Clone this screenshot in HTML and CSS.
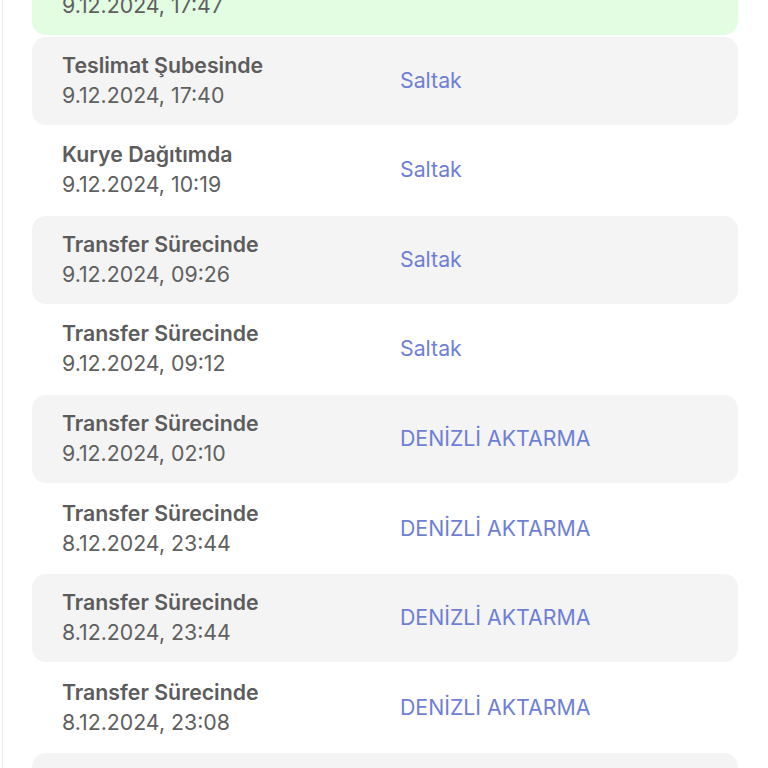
FILE: index.html
```html
<!DOCTYPE html>
<html lang="tr">
<head>
<meta charset="utf-8">
<link rel="stylesheet" href="styles.css">
</head>
<body>
<div class="page">
  <div class="list">
    <div class="row green">
      <div class="info"><div class="title">Teslim Edildi</div><div class="date">9.12.2024, 17:47</div></div>
      <div class="place">Saltak</div>
    </div>
    <div class="row grey">
      <div class="info"><div class="title">Teslimat Şubesinde</div><div class="date">9.12.2024, 17:40</div></div>
      <div class="place">Saltak</div>
    </div>
    <div class="row">
      <div class="info"><div class="title">Kurye Dağıtımda</div><div class="date">9.12.2024, 10:19</div></div>
      <div class="place">Saltak</div>
    </div>
    <div class="row grey">
      <div class="info"><div class="title">Transfer Sürecinde</div><div class="date">9.12.2024, 09:26</div></div>
      <div class="place">Saltak</div>
    </div>
    <div class="row">
      <div class="info"><div class="title">Transfer Sürecinde</div><div class="date">9.12.2024, 09:12</div></div>
      <div class="place">Saltak</div>
    </div>
    <div class="row grey">
      <div class="info"><div class="title">Transfer Sürecinde</div><div class="date">9.12.2024, 02:10</div></div>
      <div class="place">DENİZLİ AKTARMA</div>
    </div>
    <div class="row">
      <div class="info"><div class="title">Transfer Sürecinde</div><div class="date">8.12.2024, 23:44</div></div>
      <div class="place">DENİZLİ AKTARMA</div>
    </div>
    <div class="row grey">
      <div class="info"><div class="title">Transfer Sürecinde</div><div class="date">8.12.2024, 23:44</div></div>
      <div class="place">DENİZLİ AKTARMA</div>
    </div>
    <div class="row">
      <div class="info"><div class="title">Transfer Sürecinde</div><div class="date">8.12.2024, 23:08</div></div>
      <div class="place">DENİZLİ AKTARMA</div>
    </div>
    <div class="row grey">
      <div class="info"><div class="title">Transfer Sürecinde</div><div class="date">8.12.2024, 22:51</div></div>
      <div class="place">DENİZLİ AKTARMA</div>
    </div>
  </div>
</div>
</body>
</html>
```
FILE: styles.css
```css
html, body {
  margin: 0;
  padding: 0;
  background: #ffffff;
  overflow: hidden;
}
body {
  font-family: Inter, "Noto Sans", "Liberation Sans", sans-serif;
  height: 768px;
}
.page {
  height: 768px;
  border-left: 1px solid #ececec;
  margin-left: 2px;
  overflow: hidden;
}
.list {
  margin: -53px 0 0 29px;
  width: 706px;
  display: flex;
  flex-direction: column;
  gap: 1.6px;
}
.row {
  height: 88px;
  border-radius: 14px;
  display: flex;
  align-items: center;
  padding-left: 30px;
  padding-bottom: 2px;
  box-sizing: border-box;
}
.grey { background: #f4f4f4; }
.green { background: #e2fde2; }
.info {
  width: 338px;
  color: #5c5c5c;
  font-size: 21.3px;
  line-height: 30px;
}
.title {
  font-weight: 600;
}
.date {
  font-weight: 400;
  color: #606060;
}
.place {
  color: #6f7fd6;
  font-size: 21.3px;
}
```
